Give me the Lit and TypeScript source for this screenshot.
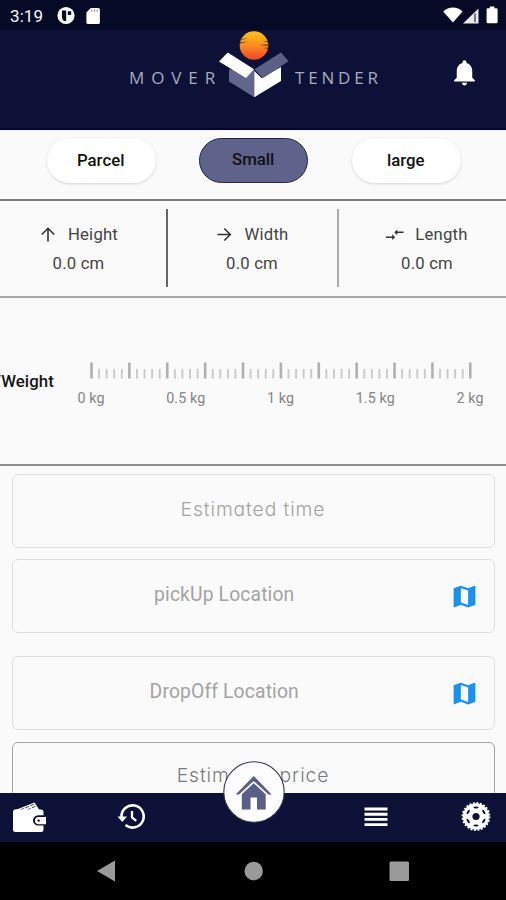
import { LitElement, html, svg, css } from "lit";
import { customElement, property, state } from "lit/decorators.js";
import { classMap } from "lit/directives/class-map.js";

@customElement("status-bar")
class StatusBar extends LitElement {
  static styles = css`
    :host { display: flex; height: 30px; background: #070a26; color: #f4f4f8; align-items: center; padding: 1px 0 0 10px; box-sizing: border-box; }
    .time { font: 400 17px/30px Roboto, sans-serif; width: 47px; letter-spacing: 0.1px; }
    .left { display: block; flex: none; }
    .right { display: block; margin-left: auto; }
  `;
  render() {
    return html`
      <span class="time">3:19</span>
      <svg class="left" width="46" height="20" viewBox="0 0 46 20">
        <circle cx="9" cy="9.5" r="8.6" fill="#fff" />
        <path d="M5 4.6h4.2v10.3H7.2C5.5 14.2 4.900 12.500 4.900 9.500z" fill="#070a26" />
        <rect x="10.800" y="5.300" width="3.400" height="3.800" rx=".8" fill="#070a26" />
        <path d="M33.800 2h7.500a1.600 1.600 0 0 1 1.600 1.600v12.800a1.600 1.600 0 0 1-1.600 1.600H31a1.600 1.600 0 0 1-1.600-1.600V6.400z" fill="#fff" />
        <path d="M34.800 3.500v2.200M37.500 3.500v2.200M40.200 3.500v2.200" stroke="#8a8b98" stroke-width="1.100" />
      </svg>
      <svg class="right" width="64" height="20" viewBox="0 0 64 20">
        <path d="M1.200 5.400C6.600.2 15.200.2 20.600 5.400L10.900 16.500z" fill="#fff" />
        <path d="M36.500 2.500v15H21z" fill="#e8e8ea" />
        <path d="M33 7.500v8.400" stroke="#33354c" stroke-width="1.300" />
        <path d="M48.500 3h2V1.300h4.600V3h2a1.200 1.200 0 0 1 1.200 1.200v12.600a1.200 1.200 0 0 1-1.200 1.200h-8.600a1.200 1.200 0 0 1-1.200-1.200V4.200a1.200 1.200 0 0 1 1.200-1.200z" transform="translate(-2.700 -.8)" fill="#fff" />
      </svg>`;
  }
}

@customElement("brand-header")
class BrandHeader extends LitElement {
  static styles = css`
    :host { display: flex; height: 100px; background: #0d1138; border-bottom: 2px solid #03052a; box-sizing: border-box; align-items: flex-start; padding-left: 129px; }
    .word { font: 500 17px/24px "Open Sans", sans-serif; color: #a9abbd; margin-top: 35.500px; white-space: nowrap; }
    .mover { width: 89px; letter-spacing: 6.900px; }
    .tender { width: 86px; letter-spacing: 3.800px; margin-left: 5px; }
    .logo { display: block; flex: none; }
    .bell { display: block; margin: 26.500px 0 0 67.500px; flex: none; }
  `;
  render() {
    return html`
      <span class="word mover">MOVER</span>
      <svg class="logo" width="72" height="70" viewBox="218 30 72 70">
        <defs>
          <linearGradient id="sun" x1="0" y1="0" x2="0" y2="1">
            <stop offset="0" stop-color="#fcc419" /><stop offset=".5" stop-color="#fb8c1e" /><stop offset="1" stop-color="#f0432c" />
          </linearGradient>
        </defs>
        <circle cx="254" cy="45.500" r="14.300" fill="url(#sun)" />
        <path d="M242 38.900l6-.8-7 2.200zM240 42.300l8-.8-8.500 2.300zM268 41l-5 .5 5 .8zM268.500 44.200l-9 .7 9 1zM268 47.600l-5 .3 5 .8z" fill="#6b3a30" />
        <path d="M229 69.500L254.300 70V97.300L229 81.500z" fill="#63668c" />
        <path d="M254.300 71L261.500 78L281 67V81L254.300 97.300z" fill="#fff" />
        <path d="M227.800 52.400L254 69.300L246 78L219 61.500z" fill="#fff" />
        <path d="M281 52.400L254.500 69.300L262.800 78.200L288.500 61.200z" fill="#5d6086" />
      </svg>
      <span class="word tender">TENDER</span>
      <svg class="bell" width="31" height="31" viewBox="0 0 24 24"><path fill="#fff" d="M12 22c1.100 0 2-.9 2-2h-4c0 1.100.89 2 2 2zm6-6v-5c0-3.070-1.640-5.640-4.500-6.320V4c0-.83-.67-1.500-1.500-1.500s-1.500.67-1.500 1.500v.68C7.630 5.360 6 7.920 6 11v5l-2 2v1h16v-1l-2-2z"/></svg>`;
  }
}

@customElement("size-picker")
class SizePicker extends LitElement {
  @state() selected = "Small";
  static styles = css`
    :host { display: flex; height: 69px; gap: 43.500px; padding: 7px 0 0 46.700px; box-sizing: border-box; border-top: 1px solid #eef0fa; }
    .chip { width: 109px; height: 45px; padding: 0 1px 0 0; border: 0; border-radius: 23px; background: #fff; color: #111; font: 500 16.800px/45px Roboto, sans-serif; text-align: center; box-shadow: 0 1px 3px #00000026; box-sizing: border-box; }
    .on { background: #5f628a; border: 1.500px solid #22264d; padding-bottom: 2px; line-height: 41px; box-shadow: none; }
  `;
  render() {
    return ["Parcel", "Small", "large"].map(
      (s) => html`<button class=${classMap({ chip: true, on: s === this.selected })} @click=${() => (this.selected = s)}>${s}</button>`
    );
  }
}

const arrows = {
  up: svg`<path d="M9 16.500V3.500M2.800 9.500L9 3.300l6.200 6.200" />`,
  right: svg`<path d="M1.500 9.500h12.500M8.300 3.500l6 6-6 6" />`,
  both: svg`<path d="M0 12.200h7M17.500 7.300h-7" /><path d="M6.200 9.300l3 2.900-3 2.900zM11.300 4.400l-3 2.900 3 2.900z" fill="#333" stroke="none" />`,
};

@customElement("dimension-row")
class DimensionRow extends LitElement {
  static styles = css`
    :host { display: grid; grid-template-columns: 166px 1.500px 169px 2.500px 167px; height: 99px; border-top: 2px solid #7b7b7b; border-bottom: 2.500px solid #aaa; box-sizing: border-box; align-items: start; }
    .cell { display: flex; flex-direction: column; align-items: center; font: 400 16.700px/29px Roboto, sans-serif; letter-spacing: .2px; color: #444; padding-top: 18.500px; }
    .first { padding-right: 9px; }
    .last { padding-left: 9px; }
    .title { display: flex; align-items: center; gap: 9px; }
    .glyph { display: block; fill: none; stroke: #333; stroke-width: 1.600; }
    .rule { height: 78px; margin-top: 8px; background: #666; }
    .soft { background: #aaa; }
  `;
  cell(name: string, icon: unknown, cls = "") {
    return html`<div class="cell ${cls}">
      <div class="title"><svg class="glyph" width="20" height="19" viewBox="0 0 20 19">${icon}</svg><span>${name}</span></div>
      <div>0.0 cm</div>
    </div>`;
  }
  render() {
    return html`${this.cell("Height", arrows.up, "first")}<div class="rule"></div>
      ${this.cell("Width", arrows.right)}<div class="rule soft"></div>
      ${this.cell("Length", arrows.both, "last")}`;
  }
}

@customElement("weight-scale")
class WeightScale extends LitElement {
  static styles = css`
    :host { display: flex; height: 168px; border-bottom: 2px solid #8c8c8c; box-sizing: border-box; overflow: hidden; }
    .label { font: 500 16.800px/24px Roboto, sans-serif; color: #161616; margin: 71px 0 0 -5.500px; width: 72.500px; flex: none; letter-spacing: .1px; }
    .scale { width: 427px; padding-top: 64px; flex: none; }
    .ticks { display: block; }
    .legend { display: flex; justify-content: space-between; padding: 0 24px; font: 400 14.300px/20px Roboto, sans-serif; color: #858585; margin-top: 9px; letter-spacing: .1px; }
    .legend span { width: 0; display: flex; justify-content: center; white-space: nowrap; }
  `;
  render() {
    const ticks = Array.from({ length: 51 }, (_, i) => i);
    return html`<div class="label">/Weight</div>
      <div class="scale">
        <svg class="ticks" width="427" height="17" viewBox="0 0 427 17">
          ${ticks.map((i) => {
            const major = i % 5 === 0;
            const x = 24.5 + i * 7.576;
            return svg`<line x1=${x} x2=${x} y1=${major ? 0.5 : 7} y2="16.5" stroke=${major ? "#b0b0b0" : "#cacaca"} stroke-width=${major ? 2.6 : 1.9} />`;
          })}
        </svg>
        <div class="legend">${["0 kg", "0.5 kg", "1 kg", "1.5 kg", "2 kg"].map((t) => html`<span>${t}</span>`)}</div>
      </div>`;
  }
}

@customElement("form-field")
class FormField extends LitElement {
  @property() hint = "";
  @property({ type: Boolean }) map = false;
  @property({ type: Boolean }) strong = false;
  static styles = css`
    :host { display: block; }
    .box { display: flex; align-items: center; height: 74px; border: 1.500px solid #dedede; border-radius: 6px; box-sizing: border-box; }
    .strong { border-color: #a3a3a3; }
    .hint { flex: 1; text-align: center; font: 400 19.300px/28px Roboto, sans-serif; color: #a3a3a3; letter-spacing: .15px; padding: 0 1px 2px 0; }
    .geo { font: 350 19.300px/28px Inter, "Open Sans", sans-serif; font-feature-settings: "cv11", "ss03"; letter-spacing: .9px; padding-bottom: 4px; }
    .strong .hint { color: #7c7c7c; padding-bottom: 8px; }
    .map { display: block; width: 29px; height: 29px; margin-right: 15px; }
    .withmap { padding-right: 14.500px; }
  `;
  render() {
    return html`<div class=${classMap({ box: true, strong: this.strong })}>
      <span class=${classMap({ hint: true, geo: !this.map, withmap: this.map })}>${this.hint}</span>
      ${this.map
        ? html`<svg class="map" viewBox="0 0 24 24"><path fill="#1a90f2" d="M20.500 3l-.16.03L15 5.100 9 3 3.360 4.900c-.21.07-.36.25-.36.48V20.500c0 .28.22.5.5.5l.16-.03L9 18.900l6 2.100 5.640-1.900c.21-.07.36-.25.36-.48V3.500c0-.28-.22-.5-.5-.5zM15 19l-6-2.110V5l6 2.110V19z"/></svg>`
        : ""}
    </div>`;
  }
}

@customElement("bottom-nav")
class BottomNav extends LitElement {
  static styles = css`
    :host { display: flex; position: relative; height: 49px; background: #0d1138; align-items: center; padding: 0 15px 1px 12px; box-sizing: border-box; flex: none; }
    .item { display: block; flex: none; }
    .history { margin-left: 68.500px; }
    .menu { margin-left: auto; margin-right: 73.500px; }
    .home { position: absolute; left: 223px; top: -32px; display: block; }
  `;
  render() {
    const holes = [0, 60, 120, 180, 240, 300];
    return html`
      <svg class="item" width="36" height="34" viewBox="12 800 36 34">
        <path d="M18 809L34.500 802.500L39.500 810H15z" fill="#fff" />
        <path d="M20 810L34 804.300M27 810L36 806" stroke="#0d1138" stroke-width=".8" stroke-dasharray="4 1.500" />
        <path d="M14.500 809.500H41a2.500 2.500 0 0 1 2.500 2.500v17.500a2.500 2.500 0 0 1-2.500 2.500H15.500a2.500 2.500 0 0 1-2.500-2.500V811z" fill="#fff" />
        <path d="M46 815.200H38.200a5.200 5.200 0 0 0 0 10.400H46z" fill="#0d1138" />
        <path d="M46 817H38.600a3.600 3.600 0 0 0 0 7.200H46z" fill="#fff" />
        <circle cx="38.700" cy="820.600" r="1.200" fill="#0d1138" />
      </svg>
      <svg class="item history" width="28" height="28" viewBox="117 803 28 28">
        <path d="M121.500 817A11.100 11.100 0 1 1 125.500 825" fill="none" stroke="#fff" stroke-width="2.600" />
        <path d="M117.600 816.500h9.400l-4.700 5.500z" fill="#fff" />
        <path d="M132 811v6.500l4.300 3.300" fill="none" stroke="#fff" stroke-width="2.300" />
      </svg>
      <svg class="item menu" width="24" height="20" viewBox="0 0 24 20">
        <path d="M.5 2h23M.5 7.200h23M.5 12.400h23M.5 17.600h23" stroke="#fff" stroke-width="2.900" />
      </svg>
      <svg class="item" width="30" height="30" viewBox="-15 -14.500 30 30">
        <circle r="13.600" fill="none" stroke="#fff" stroke-width="1.600" stroke-dasharray="1.900 1.660" />
        <circle r="13.200" fill="#fff" />
        ${holes.map((a) => svg`<ellipse cx="0" cy="-9" rx="2.600" ry="1.100" fill="#0d1138" transform="rotate(${a})" />`)}
        <circle r="3.600" fill="#0d1138" />
      </svg>
      <svg class="home" width="62" height="64" viewBox="0 0 62 64">
        <circle cx="31" cy="31" r="30.200" fill="#fdfdff" stroke="#33364c" stroke-width="1.100" />
        <path d="M12.700 33.500L30.700 15L48.700 33.500L45.500 33.500L30.700 20L16 33.500z" fill="#5a5d88" />
        <path d="M18.800 33.300L30.700 22.300L42.700 33.300V48.500H34V36.500H27.500V48.500H18.800z" fill="#5a5d88" />
      </svg>`;
  }
}

@customElement("app-root")
class AppRoot extends LitElement {
  static styles = css`
    :host { display: flex; flex-direction: column; width: 506px; height: 900px; overflow: hidden; background: #fafafa; }
    .content { display: flex; flex-direction: column; height: 663px; overflow: hidden; flex: none; }
    .content > * { flex: none; }
    .fields { display: flex; flex-direction: column; padding: 7.500px 11px 0 12px; }
    .gap-s { margin-top: 11.500px; }
    .gap-l { margin-top: 23px; }
    .system { display: flex; justify-content: center; align-items: center; height: 58px; background: #000; flex: none; }
  `;
  render() {
    return html`
      <status-bar></status-bar>
      <brand-header></brand-header>
      <main class="content">
        <size-picker></size-picker>
        <dimension-row></dimension-row>
        <weight-scale></weight-scale>
        <div class="fields">
          <form-field hint="Estimated time"></form-field>
          <form-field class="gap-s" hint="pickUp Location" map></form-field>
          <form-field class="gap-l" hint="DropOff Location" map></form-field>
          <form-field class="gap-s" hint="Estimated price" strong></form-field>
        </div>
      </main>
      <bottom-nav></bottom-nav>
      <div class="system">
        <svg width="506" height="58" viewBox="0 0 506 58">
          <path d="M97 29L115 18.500V39.500z" fill="#9a9a9a" />
          <circle cx="253.700" cy="29" r="9.200" fill="#9a9a9a" />
          <rect x="389.500" y="19.500" width="19.500" height="19.500" rx="1.500" fill="#9a9a9a" />
        </svg>
      </div>`;
  }
}
